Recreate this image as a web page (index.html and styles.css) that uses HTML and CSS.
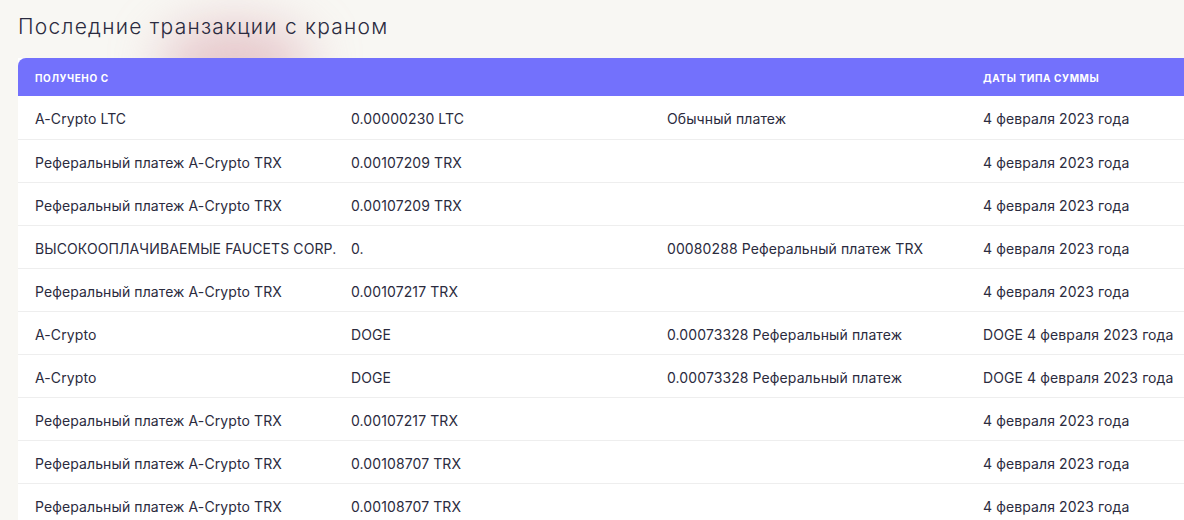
FILE: index.html
```html
<!DOCTYPE html>
<html lang="ru">
<head>
<meta charset="utf-8">
<title>Последние транзакции с краном</title>
<link rel="stylesheet" href="styles.css">
</head>
<body>
<div class="page">
  <div class="glow"></div>
  <h1 class="title">Последние транзакции с краном</h1>
  <div class="table-wrap">
    <table class="tx">
      <colgroup><col class="c"><col class="c"><col class="c"><col class="c"></colgroup>
      <thead>
        <tr><th>получено с</th><th></th><th></th><th>даты типа суммы</th></tr>
      </thead>
      <tbody>
        <tr><td>A-Crypto LTC</td><td>0.00000230 LTC</td><td>Обычный платеж</td><td>4 февраля 2023 года</td></tr>
        <tr><td>Реферальный платеж A-Crypto TRX</td><td>0.00107209 TRX</td><td></td><td>4 февраля 2023 года</td></tr>
        <tr><td>Реферальный платеж A-Crypto TRX</td><td>0.00107209 TRX</td><td></td><td>4 февраля 2023 года</td></tr>
        <tr><td>ВЫСОКООПЛАЧИВАЕМЫЕ FAUCETS CORP.</td><td>0.</td><td>00080288 Реферальный платеж TRX</td><td>4 февраля 2023 года</td></tr>
        <tr><td>Реферальный платеж A-Crypto TRX</td><td>0.00107217 TRX</td><td></td><td>4 февраля 2023 года</td></tr>
        <tr><td>A-Crypto</td><td>DOGE</td><td>0.00073328 Реферальный платеж</td><td>DOGE 4 февраля 2023 года</td></tr>
        <tr><td>A-Crypto</td><td>DOGE</td><td>0.00073328 Реферальный платеж</td><td>DOGE 4 февраля 2023 года</td></tr>
        <tr><td>Реферальный платеж A-Crypto TRX</td><td>0.00107217 TRX</td><td></td><td>4 февраля 2023 года</td></tr>
        <tr><td>Реферальный платеж A-Crypto TRX</td><td>0.00108707 TRX</td><td></td><td>4 февраля 2023 года</td></tr>
        <tr><td>Реферальный платеж A-Crypto TRX</td><td>0.00108707 TRX</td><td></td><td>4 февраля 2023 года</td></tr>
      </tbody>
    </table>
  </div>
</div>
</body>
</html>
```
FILE: styles.css
```css
html, body {
  margin: 0;
  padding: 0;
  background: #f8f7f3;
  overflow: hidden;
}
body {
  font-family: Inter, "Noto Sans", sans-serif;
  color: #2a2a3d;
}
.page {
  position: relative;
  padding: 12px 0 0 18px;
  height: 520px;
  box-sizing: border-box;
  overflow: hidden;
}
.glow {
  position: absolute;
  left: 160px;
  top: 24px;
  width: 150px;
  height: 80px;
  border-radius: 50%;
  background: rgba(212, 150, 162, 0.5);
  filter: blur(26px);
}
.title {
  position: relative;
  margin: 0 0 16px 0;
  font-size: 21px;
  line-height: 30px;
  font-weight: 300;
  letter-spacing: 1.25px;
  color: #2b2b40;
}
.table-wrap {
  position: relative;
  width: 1400px;
}
.tx {
  border-collapse: collapse;
  table-layout: fixed;
  width: 1264px;
  background: #fff;
}
.tx col.c {
  width: 316px;
}
.tx thead th {
  background: #7371fc;
  color: #fff;
  font-size: 10px;
  font-weight: 700;
  text-transform: uppercase;
  letter-spacing: 0.6px;
  text-align: left;
  height: 38px;
  padding: 2px 0 0 17px;
  box-sizing: border-box;
}
.tx thead th:first-child {
  border-top-left-radius: 8px;
}
.tx tbody td {
  font-size: 14px;
  letter-spacing: 0.1px;
  height: 43px;
  padding: 3px 0 0 17px;
  box-sizing: border-box;
  border-bottom: 1px solid #eeeeee;
  white-space: nowrap;
  color: #2b2b3e;
}
```
